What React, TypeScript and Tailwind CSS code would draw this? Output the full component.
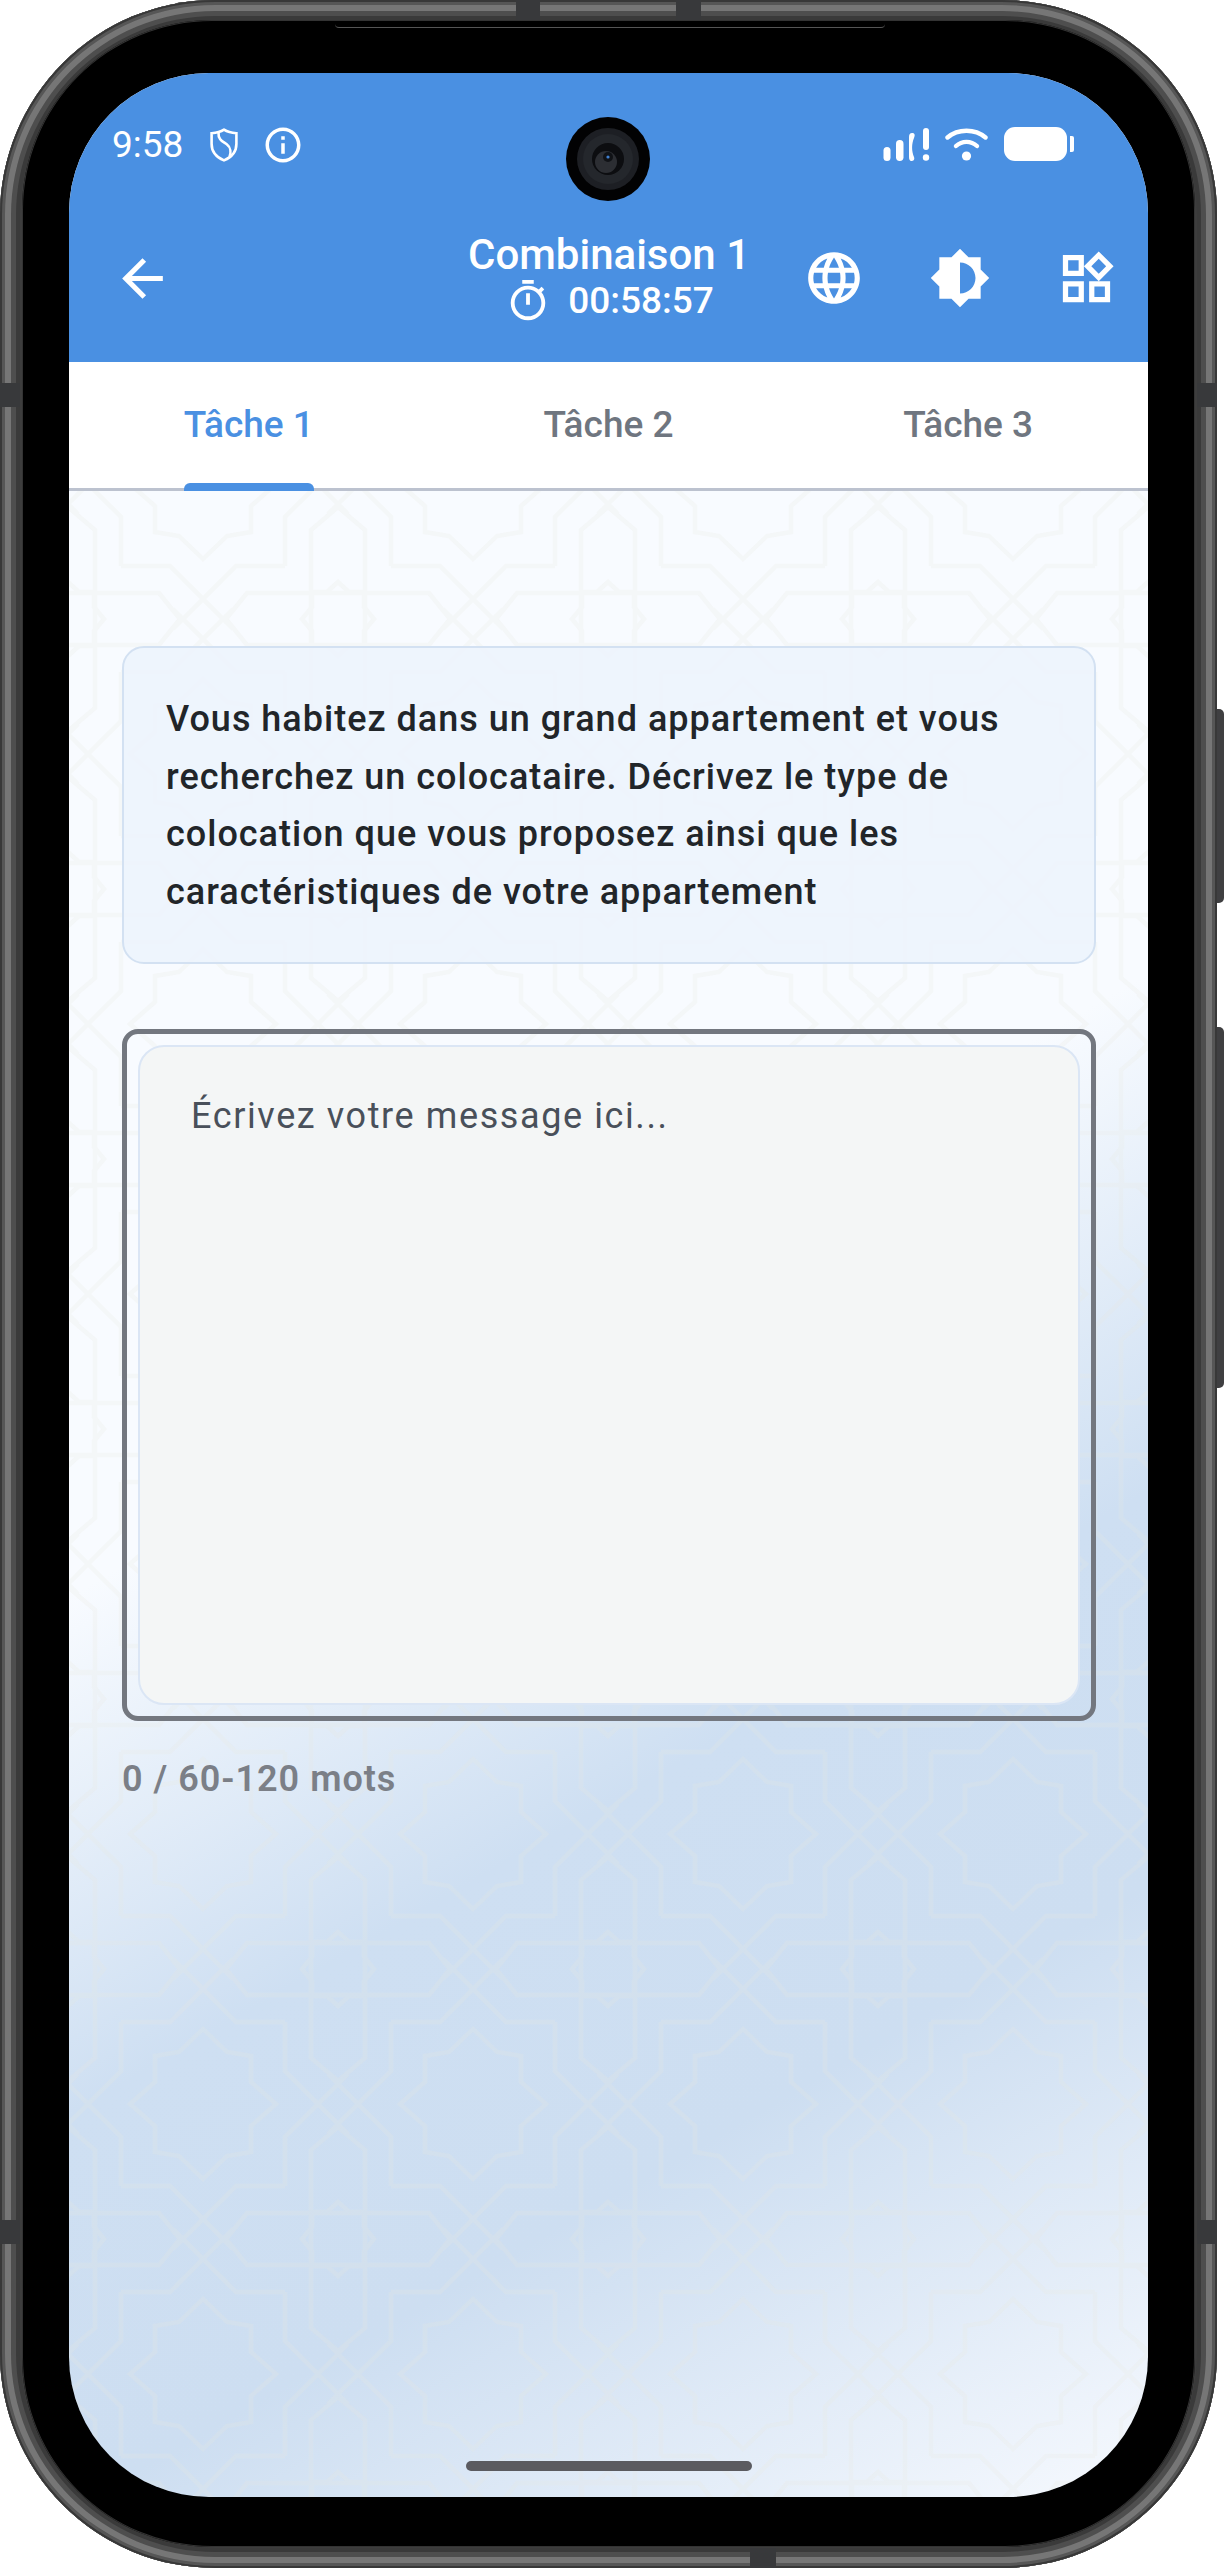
import React from "react";

function Pattern() {
  return (
    <svg className="absolute inset-0 w-full h-full" aria-hidden="true">
      <defs>
        <g id="motif" fill="none" stroke="#e6e4dc" strokeWidth="4.5">
          <path d="M0-112L27-89V89L0 112L-27 89V-89Z" />
          <path d="M-112 0L-91-26H91L112 0L91 26H-91Z" />
          <path d="M0-37L-11-27H-26V-12L-36 0L-26 12V27H-11L0 37L11 27H26V12L36 0L26-12V-27H11Z" />
          <path d="M53-53H102L165 10M-53-53H-102L-165 10M53 53H102L165-10M-53 53H-102L-165-10" />
          <path d="M53-53V-102L-10-165M-53-53V-102L10-165M53 53V102L-10 165M-53 53V102L10 165" />
        </g>
        <path id="bigstar" fill="none" stroke="#e6e4dc" strokeWidth="4.5" d="M0-75L-24-52L-48-48V-22L-73 0L-48 22V48L-24 52L0 75L24 52L48 48V22L73 0L48-22V-48L24-52Z" />
        <pattern id="moroccan" width="270" height="270" patternUnits="userSpaceOnUse" patternTransform="translate(134 -129)">
          <g opacity="0.21">
            <use href="#motif" x="135" y="135" />
            <use href="#motif" x="-135" y="135" />
            <use href="#motif" x="405" y="135" />
            <use href="#motif" x="135" y="-135" />
            <use href="#motif" x="135" y="405" />
            <use href="#bigstar" x="0" y="0" />
            <use href="#bigstar" x="270" y="0" />
            <use href="#bigstar" x="0" y="270" />
            <use href="#bigstar" x="270" y="270" />
          </g>
        </pattern>
      </defs>
      <rect width="100%" height="100%" fill="url(#moroccan)" />
    </svg>
  );
}

function StatusBar() {
  return (
    <div className="flex h-[89px] items-end justify-between pb-[1px] pl-[43px] pr-[74px] text-white">
      <div className="-mb-[5px] flex items-center">
        <span className="w-[98px] text-[37px] leading-[40px]">9:58</span>
        <svg width="28" height="34" viewBox="0 0 28 34" fill="none" stroke="white" strokeWidth="2.6">
          <path d="M14 1.7C18 4.4 22 5 26.4 5.2V16C26.4 24 21 29.5 14 32.4C7 29.5 1.6 24 1.6 16V5.2C6 5 10 4.4 14 1.7Z" />
          <path d="M8.5 4.5C8 12 13 13.5 17 16.5C21 19.5 21 25 19.5 29" />
        </svg>
        <svg className="ml-[24px]" width="42" height="42" viewBox="0 0 24 24" fill="white">
          <path d="M11 7h2v2h-2zm0 4h2v6h-2zm1-9C6.48 2 2 6.48 2 12s4.48 10 10 10 10-4.48 10-10S17.52 2 12 2zm0 18c-4.41 0-8-3.59-8-8s3.59-8 8-8 8 3.59 8 8-3.59 8-8 8z" />
        </svg>
      </div>
      <div className="flex items-center">
        <svg width="47" height="33" viewBox="0 0 47 33" fill="white">
          <rect x="0.5" y="19" width="7" height="14" rx="3.5" />
          <rect x="13" y="12" width="7.5" height="21" rx="3.7" />
          <path d="M29 5C31.5 5 32.5 6.5 31 10C28.5 16 28.5 23 31 29C32 32 30 33 28.5 33C26.5 33 26 31 26 29V9C26 6.5 27 5 29 5Z" />
          <rect x="40" y="0" width="6" height="22" rx="3" />
          <circle cx="43" cy="29.5" r="3.2" />
        </svg>
        <svg className="ml-[15px]" width="43" height="33" viewBox="0 0 43 33" fill="none" stroke="white" strokeWidth="4.4" strokeLinecap="round">
          <path d="M2.5 9.5C13 0.5 30 0.5 40.5 9.5" />
          <path d="M11 18C17 12.5 26 12.5 32 18" />
          <circle cx="21.5" cy="28" r="4.6" fill="white" stroke="none" />
        </svg>
        <div className="ml-[16px] h-[34px] w-[63px] rounded-[11px] bg-white" />
        <div className="ml-[3px] h-[16px] w-[4px] rounded-r-[2px] bg-white" />
      </div>
    </div>
  );
}

function Camera() {
  return (
    <svg className="absolute left-[497px] top-[44px]" width="84" height="84" viewBox="0 0 84 84">
      <circle cx="42" cy="42" r="42" fill="#020203" />
      <circle cx="42" cy="42" r="31" fill="#1d1f24" />
      <circle cx="42" cy="42" r="25" fill="#24272c" />
      <circle cx="42" cy="42" r="16" fill="#0c0d10" />
      <circle cx="40" cy="45" r="11" fill="#2c2e33" />
      <circle cx="42" cy="40" r="5" fill="#101216" />
      <circle cx="42" cy="40" r="1.6" fill="#3f7fd0" />
    </svg>
  );
}

function Header() {
  return (
    <div className="flex h-[200px] items-center pl-[43px] text-white">
      <svg className="mt-[32px]" width="61" height="61" viewBox="0 0 24 24" fill="white">
        <path d="M20 11H7.83l5.59-5.59L12 4l-8 8 8 8 1.41-1.41L7.83 13H20v-2z" />
      </svg>
      <div className="mt-[32px] ml-[297px] flex w-[278px] flex-col items-center">
        <span className="whitespace-nowrap text-[42px] font-medium leading-[46px]">Combinaison 1</span>
        <div className="flex items-center pl-[1px]">
          <svg width="46" height="46" viewBox="0 0 24 24" fill="white">
            <path d="M15 1H9v2h6V1zm-4 13h2V8h-2v6zm8.03-6.61l1.42-1.42c-.43-.51-.9-.99-1.41-1.41l-1.42 1.42C16.07 4.74 14.12 4 12 4c-4.97 0-9 4.03-9 9s4.02 9 9 9 9-4.03 9-9c0-2.12-.74-4.07-1.97-5.61zM12 20c-3.87 0-7-3.13-7-7s3.13-7 7-7 7 3.13 7 7-3.13 7-7 7z" />
          </svg>
          <span className="ml-[17px] text-[37px] font-medium leading-[36px]">00:58:57</span>
        </div>
      </div>
      <svg className="mt-[32px] ml-[55px]" width="62" height="62" viewBox="0 0 24 24" fill="white">
        <path d="M11.99 2C6.47 2 2 6.48 2 12s4.47 10 9.99 10C17.52 22 22 17.52 22 12S17.52 2 11.99 2zm6.93 6h-2.95c-.32-1.25-.78-2.45-1.38-3.56 1.84.63 3.37 1.91 4.33 3.56zM12 4.04c.83 1.2 1.48 2.53 1.91 3.96h-3.82c.43-1.43 1.08-2.76 1.91-3.96zM4.26 14C4.1 13.36 4 12.69 4 12s.1-1.36.26-2h3.38c-.08.66-.14 1.32-.14 2 0 .68.06 1.34.14 2H4.26zm.82 2h2.95c.32 1.25.78 2.45 1.38 3.56-1.84-.63-3.37-1.9-4.33-3.56zm2.95-8H5.08c.96-1.66 2.49-2.93 4.33-3.56C8.81 5.55 8.35 6.75 8.03 8zM12 19.96c-.83-1.2-1.48-2.53-1.91-3.96h3.82c-.43 1.43-1.08 2.76-1.91 3.96zM14.34 14H9.66c-.09-.66-.16-1.32-.16-2 0-.68.07-1.35.16-2h4.68c.09.65.16 1.32.16 2 0 .68-.07 1.34-.16 2zm.25 5.56c.6-1.11 1.06-2.31 1.38-3.56h2.95c-.96 1.65-2.49 2.93-4.33 3.56zM16.36 14c.08-.66.14-1.32.14-2 0-.68-.06-1.34-.14-2h3.38c.16.64.26 1.31.26 2s-.1 1.36-.26 2h-3.38z" />
      </svg>
      <svg className="mt-[32px] ml-[64px]" width="62" height="62" viewBox="0 0 24 24" fill="white">
        <path fillRule="evenodd" d="M20 15.31L23.31 12 20 8.69V4h-4.69L12 .69 8.69 4H4v4.69L.69 12 4 15.31V20h4.69L12 23.31 15.31 20H20v-4.69zM12 18V6c3.31 0 6 2.69 6 6s-2.69 6-6 6z" />
      </svg>
      <svg className="mt-[32px] ml-[64px]" width="63" height="63" viewBox="0 0 24 24" fill="white">
        <path d="M16.66 4.52l2.83 2.83-2.83 2.83-2.83-2.83 2.83-2.83M9 5v4H5V5h4m10 10v4h-4v-4h4M9 15v4H5v-4h4m7.66-13.31L11 7.34 16.66 13l5.66-5.66-5.66-5.65zM11 3H3v8h8V3zm10 10h-8v8h8v-8zm-10 0H3v8h8v-8z" />
      </svg>
    </div>
  );
}

function Tabs() {
  const tabs = ["Tâche 1", "Tâche 2", "Tâche 3"];
  return (
    <div className="grid h-[129px] grid-cols-3 border-b-[3px] border-[#bcc2cf] bg-white">
      {tabs.map((t, i) => (
        <div key={t} className="relative flex items-center justify-center pb-[1px]">
          <span className={i === 0 ? "text-[37px] font-medium text-[#4a90e2]" : "text-[37px] font-medium text-[#6f7680]"}>{t}</span>
          {i === 0 && <div className="absolute bottom-[-3px] left-[115px] h-[8px] w-[130px] rounded-t-[6px] bg-[#4a90e2]" />}
        </div>
      ))}
    </div>
  );
}

function Body() {
  return (
    <div className="relative pl-[53px] pr-[52px] pt-[155px]">
      <div className="rounded-[22px] border-[2px] border-[#d3e1f2] bg-[#ecf3fd]/85 pb-[41px] pl-[42px] pr-[30px] pt-[43px] text-[36px] font-medium leading-[57.6px] tracking-[1px] text-[#212529]">
        Vous habitez dans un grand appartement et vous
        <br />
        recherchez un colocataire. Décrivez le type de
        <br />
        colocation que vous proposez ainsi que les
        <br />
        caractéristiques de votre appartement
      </div>
      <div className="mt-[65px] h-[692px] rounded-[16px] border-[5px] border-[#73777f] p-[11px]">
        <div className="h-full rounded-[26px] border-[2px] border-[#dbe6f5] bg-[#f4f6f6] pb-[35px] pl-[51px] pr-[52px] pt-[45px] text-[36px] leading-[48px] tracking-[1.6px] text-[#49505a]">
          Écrivez votre message ici...
        </div>
      </div>
      <div className="mt-[34px] text-[36px] font-semibold leading-[48px] tracking-[1px] text-[#7b7f87]">0 / 60-120 mots</div>
    </div>
  );
}

export default function App() {
  return (
    <div className="relative h-[2570px] w-[1224px] overflow-hidden bg-white font-['Roboto',sans-serif]">
      <div className="absolute left-[1214px] top-[709px] h-[194px] w-[10px] rounded-r-[5px] bg-[#3f3f41]" />
      <div className="absolute left-[1214px] top-[1027px] h-[361px] w-[10px] rounded-r-[5px] bg-[#3f3f41]" />
      <div className="relative h-[2568px] w-[1217px] rounded-[215px] bg-[#3d3d3d] px-[22px] py-[20px] shadow-[inset_0_0_0_2px_#383838,inset_0_0_0_5px_#565656,inset_0_0_0_11px_#767676,inset_0_0_0_16px_#4e4e4e,inset_0_0_0_20px_#3a3a3a]">
        <div className="h-[2527px] rounded-[190px] bg-black pb-[50px] pl-[47px] pr-[47px] pt-[53px] shadow-[inset_0_0_0_1px_#333333]">
          <div className="relative flex h-[2424px] flex-col overflow-hidden rounded-[140px] bg-[linear-gradient(150deg,#f8fbff_50%,#cedff2_67%,#cddef1_80%,#f6f9fe_100%)]">
            <Pattern />
            <div className="relative bg-[#4a90e2]">
              <StatusBar />
              <Header />
              <Camera />
            </div>
            <div className="relative">
              <Tabs />
            </div>
            <Body />
            <div className="relative mx-auto mb-[26px] mt-auto h-[10px] w-[286px] rounded-[5px] bg-[#5b5b60]" />
          </div>
        </div>
        <div className="absolute left-[335px] top-[20px] h-[8px] w-[550px] rounded-b-[4px] border-b border-[#555555]" />
        <div className="absolute left-[516px] top-0 h-[20px] w-[24px] bg-[#38393b]" />
        <div className="absolute left-[676px] top-0 h-[20px] w-[25px] bg-[#38393b]" />
        <div className="absolute bottom-0 left-[750px] h-[20px] w-[26px] bg-[#38393b]" />
        <div className="absolute left-0 top-[383px] h-[24px] w-[20px] bg-[#38393b]" />
        <div className="absolute right-0 top-[383px] h-[24px] w-[20px] bg-[#38393b]" />
        <div className="absolute left-0 top-[2220px] h-[24px] w-[20px] bg-[#38393b]" />
        <div className="absolute right-0 top-[2220px] h-[24px] w-[20px] bg-[#38393b]" />
      </div>
    </div>
  );
}
